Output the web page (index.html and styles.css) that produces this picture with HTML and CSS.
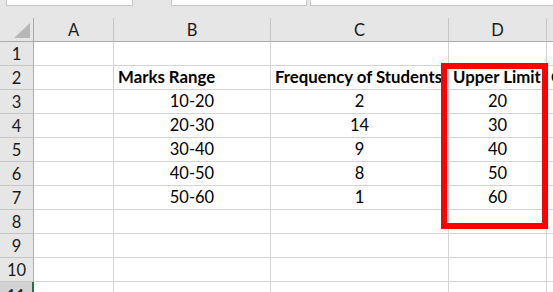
FILE: index.html
```html
<!DOCTYPE html>
<html>
<head>
<meta charset="utf-8">
<link rel="stylesheet" href="styles.css">
</head>
<body>
<div class="app">
  <div class="topbar">
    <div class="box box-name"></div>
    <div class="box box-mid"></div>
    <div class="box box-formula"></div>
  </div>
  <div class="sheet">
    <div class="grid">
      <div class="corner"><span class="tri"></span></div>
      <div class="colh">A</div>
      <div class="colh">B</div>
      <div class="colh">C</div>
      <div class="colh">D</div>
      <div class="colh last"></div>

      <div class="rowh">1</div>
      <div class="cell"></div><div class="cell"></div><div class="cell"></div><div class="cell"></div><div class="cell last"></div>

      <div class="rowh">2</div>
      <div class="cell"></div>
      <div class="cell bold left">Marks Range</div>
      <div class="cell bold left">Frequency of Students</div>
      <div class="cell bold left">Upper Limit</div>
      <div class="cell bold left last">Cumulative Frequency</div>

      <div class="rowh">3</div>
      <div class="cell"></div><div class="cell">10-20</div><div class="cell">2</div><div class="cell">20</div><div class="cell last"></div>

      <div class="rowh">4</div>
      <div class="cell"></div><div class="cell">20-30</div><div class="cell">14</div><div class="cell">30</div><div class="cell last"></div>

      <div class="rowh">5</div>
      <div class="cell"></div><div class="cell">30-40</div><div class="cell">9</div><div class="cell">40</div><div class="cell last"></div>

      <div class="rowh">6</div>
      <div class="cell"></div><div class="cell">40-50</div><div class="cell">8</div><div class="cell">50</div><div class="cell last"></div>

      <div class="rowh">7</div>
      <div class="cell"></div><div class="cell">50-60</div><div class="cell">1</div><div class="cell">60</div><div class="cell last"></div>

      <div class="rowh">8</div>
      <div class="cell"></div><div class="cell"></div><div class="cell"></div><div class="cell"></div><div class="cell last"></div>

      <div class="rowh">9</div>
      <div class="cell"></div><div class="cell"></div><div class="cell"></div><div class="cell"></div><div class="cell last"></div>

      <div class="rowh">10</div>
      <div class="cell"></div><div class="cell"></div><div class="cell"></div><div class="cell"></div><div class="cell last"></div>

      <div class="rowh sel">11</div>
      <div class="cell"></div><div class="cell"></div><div class="cell"></div><div class="cell"></div><div class="cell last"></div>
    </div>
    <div class="highlight"></div>
  </div>
</div>
</body>
</html>
```

FILE: styles.css
```css
* { box-sizing: border-box; }
html, body { margin: 0; padding: 0; }
body {
  width: 553px;
  height: 292px;
  overflow: hidden;
  background: #e6e6e6;
  font-family: Lato, "Open Sans", sans-serif;
  color: #000;
}
.app { width: 553px; height: 292px; overflow: hidden; }

.topbar {
  height: 18px;
  display: flex;
  align-items: flex-start;
  background: #e6e6e6;
}
.box {
  height: 6px;
  background: #fff;
  border: 1px solid #c6c6c6;
  border-top: none;
}
.box-name { margin-left: 6px; width: 127px; }
.box-mid { margin-left: 38px; width: 136px; }
.box-formula { margin-left: 3px; flex: 1; border-right: none; }

.sheet { position: relative; }
.grid {
  display: grid;
  grid-template-columns: 34px 80px 157px 178px 98px 6px;
  grid-template-rows: 24px repeat(11, 24px);
  background: #fff;
}

.corner {
  background: #e6e6e6;
  border-right: 1px solid #ababab;
  border-bottom: 1px solid #ababab;
  position: relative;
}
.tri {
  position: absolute;
  right: 3px;
  bottom: 3px;
  width: 0;
  height: 0;
  border-left: 16px solid transparent;
  border-bottom: 15px solid #b7b7b7;
}
.colh {
  background: #e6e6e6;
  border-right: 1px solid #c6c6c6;
  border-bottom: 1px solid #ababab;
  display: flex;
  align-items: center;
  justify-content: center;
  font-size: 16.5px;
  color: #1a1a1a;
  overflow: hidden;
}
.colh.last { border-right: none; }

.rowh {
  background: #e6e6e6;
  border-right: 1px solid #ababab;
  border-bottom: 1px solid #c6c6c6;
  display: flex;
  align-items: center;
  justify-content: center;
  font-size: 16.5px;
  color: #1a1a1a;
}
.rowh.sel {
  background: #d2d2d2;
  border-right: 2px solid #217346;
  align-items: flex-start;
  padding-top: 4px;
}

.cell {
  border-right: 1px solid #d4d4d4;
  border-bottom: 1px solid #d4d4d4;
  display: flex;
  align-items: flex-end;
  justify-content: center;
  padding-bottom: 2px;
  font-size: 16.5px;
  white-space: nowrap;
  overflow: hidden;
}
.cell.left { justify-content: flex-start; padding-left: 4px; }
.cell.last { border-right: none; padding-left: 4px; }
.bold { font-weight: 700; font-size: 16.8px; }

.highlight {
  position: absolute;
  left: 441px;
  top: 45px;
  width: 107px;
  height: 166px;
  border: 6px solid #ff0000;
  pointer-events: none;
}
```
